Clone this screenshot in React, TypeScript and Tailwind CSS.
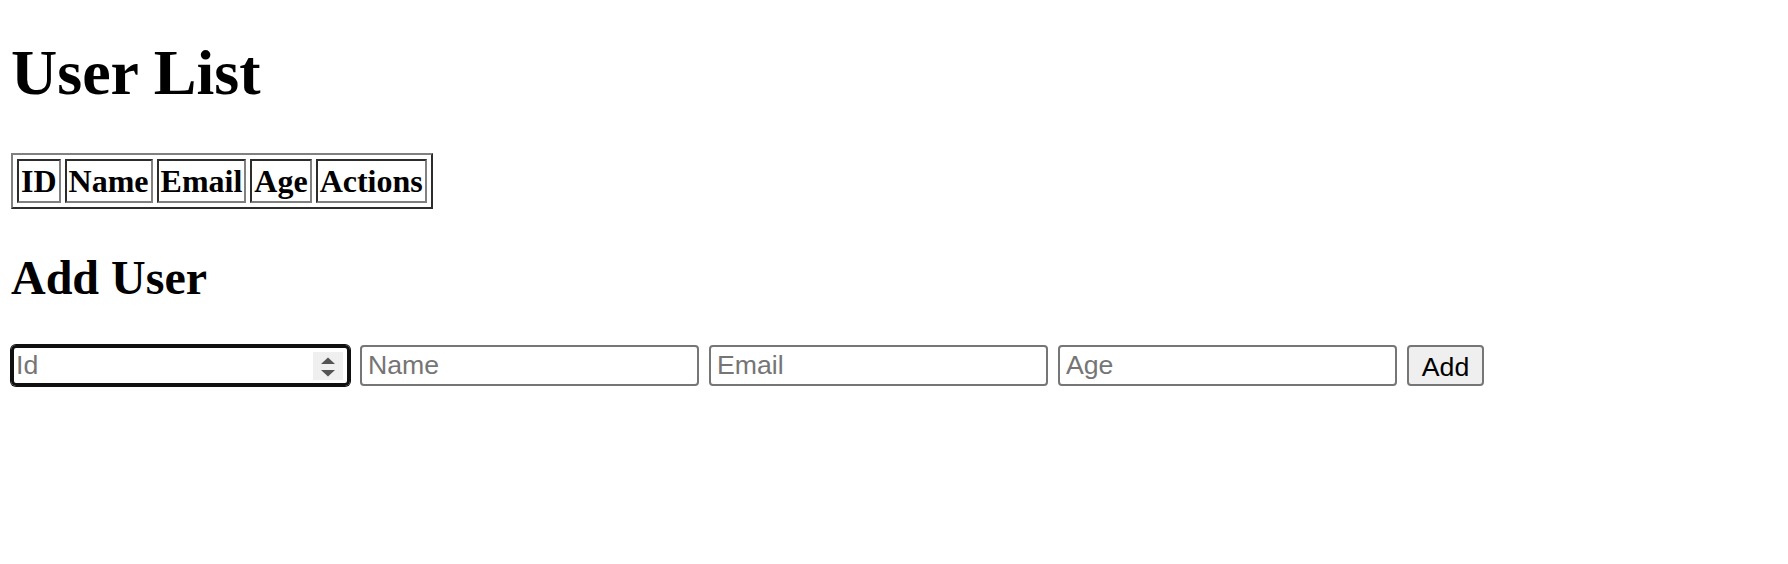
const columns = ["ID", "Name", "Email", "Age", "Actions"];

const inputClass =
  "h-[41px] w-[339px] rounded-[4px] border-2 border-[#767676] bg-white px-[6px] font-['Liberation_Sans',Arial,sans-serif] text-[26.67px] text-black outline-none placeholder:text-[#757575]";

export default function App() {
  return (
    <div className="min-h-screen bg-white pl-[11px] pt-[36px] font-['Liberation_Serif','Times_New_Roman',serif] text-black">
      <h1 className="text-[64px] font-bold leading-[74px]">User List</h1>

      <table className="mt-[43px] border-separate border-spacing-[4px] border-2 border-[gray] [border-style:outset]">
        <thead>
          <tr>
            {columns.map((col) => (
              <th
                key={col}
                className="border-2 border-[gray] p-[2px] text-[32px] font-bold leading-[36px] [border-style:inset]"
              >
                {col}
              </th>
            ))}
          </tr>
        </thead>
        <tbody />
      </table>

      <h2 className="mt-[41px] text-[48px] font-bold leading-[55px]">Add User</h2>

      <form className="mt-[40px] flex items-center gap-[10px]" onSubmit={(e) => e.preventDefault()}>
        {/* focused number field, ring + spinner */}
        <div className="flex h-[41px] w-[339px] items-center rounded-[5px] border-[3px] border-[#101010] pr-[4px] pl-[2px] shadow-[0_0_0_1px_#101010]">
          <input
            type="text"
            placeholder="Id"
            className="min-w-0 flex-1 bg-transparent font-['Liberation_Sans',Arial,sans-serif] text-[26.67px] text-black outline-none placeholder:text-[#757575]"
          />
          <svg width="30" height="28" viewBox="0 0 30 28" className="shrink-0">
            <rect width="30" height="28" fill="#efefef" />
            <polygon points="8,12 22,12 15,5.5" fill="#545454" />
            <polygon points="8,18 22,18 15,24.5" fill="#545454" />
          </svg>
        </div>
        <input type="text" placeholder="Name" className={inputClass} />
        <input type="text" placeholder="Email" className={inputClass} />
        <input type="text" placeholder="Age" className={inputClass} />
        <button
          type="submit"
          className="h-[41px] w-[77px] rounded-[4px] border-2 border-[#767676] bg-[#efefef] font-['Liberation_Sans',Arial,sans-serif] text-[26.67px] text-black"
        >
          Add
        </button>
      </form>
    </div>
  );
}
